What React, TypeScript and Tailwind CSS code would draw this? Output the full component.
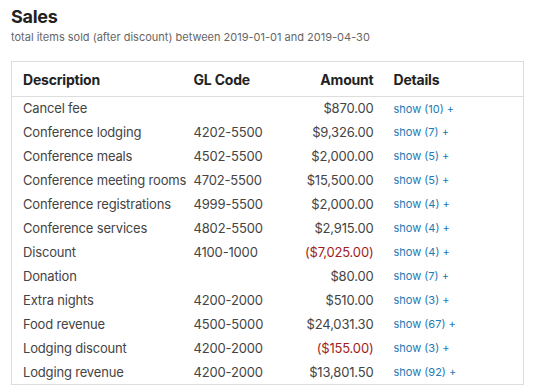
const rows = [
  { desc: 'Cancel fee', gl: '', amount: '$870.00', count: 10 },
  { desc: 'Conference lodging', gl: '4202-5500', amount: '$9,326.00', count: 7 },
  { desc: 'Conference meals', gl: '4502-5500', amount: '$2,000.00', count: 5 },
  { desc: 'Conference meeting rooms', gl: '4702-5500', amount: '$15,500.00', count: 5 },
  { desc: 'Conference registrations', gl: '4999-5500', amount: '$2,000.00', count: 4 },
  { desc: 'Conference services', gl: '4802-5500', amount: '$2,915.00', count: 4 },
  { desc: 'Discount', gl: '4100-1000', amount: '($7,025.00)', count: 4, negative: true },
  { desc: 'Donation', gl: '', amount: '$80.00', count: 7 },
  { desc: 'Extra nights', gl: '4200-2000', amount: '$510.00', count: 3 },
  { desc: 'Food revenue', gl: '4500-5000', amount: '$24,031.30', count: 67 },
  { desc: 'Lodging discount', gl: '4200-2000', amount: '($155.00)', count: 3, negative: true },
  { desc: 'Lodging revenue', gl: '4200-2000', amount: '$13,801.50', count: 92 },
]

export default function App() {
  return (
    <div className="min-h-screen bg-white px-[11px] pt-[6px] text-[#444] font-['Inter',sans-serif]">
      <h1 className="text-[18px] leading-[22px] font-bold tracking-[-0.3px] text-[#222]">Sales</h1>
      <p className="mt-[2px] text-[11px] leading-[14px] text-[#666]">
        total items sold (after discount) between 2019-01-01 and 2019-04-30
      </p>

      <table className="mt-[17px] w-[513px] table-fixed border-collapse border border-[#ddd]">
        <colgroup>
          <col className="w-[172px]" />
          <col className="w-[100px]" />
          <col className="w-[100px]" />
          <col />
        </colgroup>
        <thead>
          <tr className="h-[35px] border-b border-[#ddd] text-[14px] font-bold tracking-[-0.2px] text-[#222]">
            <th className="pl-[11px] text-left">Description</th>
            <th className="pl-[10px] text-left">GL Code</th>
            <th className="pr-[10px] text-right">Amount</th>
            <th className="pl-[10px] text-left">Details</th>
          </tr>
        </thead>
        <tbody>
          {rows.map((r) => (
            <tr key={r.desc} className="h-[24px] text-[13px] tracking-[-0.17px]">
              <td className="pl-[11px] whitespace-nowrap">{r.desc}</td>
              <td className="pl-[10px]">{r.gl}</td>
              <td className={`pr-[10px] text-right ${r.negative ? 'text-[#a11d1d]' : ''}`}>{r.amount}</td>
              <td className="pl-[10px] text-[11px] tracking-normal text-[#2379b5]">
                <a href="#" className="cursor-pointer">show ({r.count}) +</a>
              </td>
            </tr>
          ))}
        </tbody>
      </table>
    </div>
  )
}
